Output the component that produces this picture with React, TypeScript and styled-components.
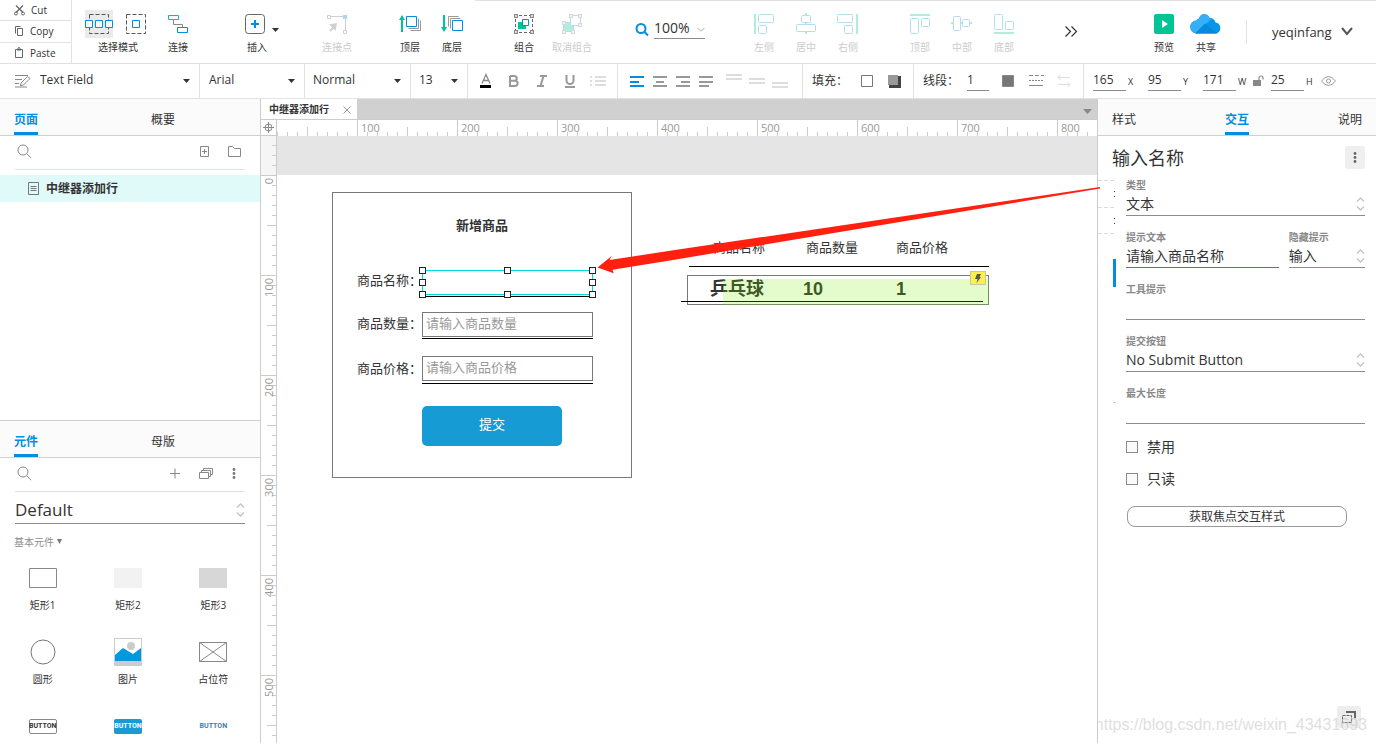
import React from 'react';
import styled, { createGlobalStyle, css } from 'styled-components';

const BLUE = '#008fe0';
const GREEN = '#00c396';
const INK = '#333333';
const GREY = '#8c8c8c';
const LINE = '#e2e2e2';
const PALE_BLUE = '#b3dcf5';
const PALE_GREEN = '#b2ecda';

const GlobalStyle = createGlobalStyle`
  *, *::before, *::after { box-sizing: border-box; }
  body {
    margin: 0;
    background: #fff;
    color: ${INK};
    font-family: 'Open Sans', 'Noto Sans CJK SC', sans-serif;
    font-size: 12px;
  }
  button, input, select {
    font: inherit;
    color: inherit;
    margin: 0;
    padding: 0;
    border: 0;
    border-radius: 0;
    background: none;
    outline: none;
  }
  select { appearance: none; }
  button { cursor: pointer; }
  svg { display: block; flex: none; overflow: visible; }
`;

const Shell = styled.div`
  display: flex;
  flex-direction: column;
  height: 100vh;
  overflow: hidden;
`;

/* ---------- top toolbar ---------- */

const TopBar = styled.header`
  display: flex;
  flex: none;
  height: 64px;
  border-bottom: 1px solid ${LINE};
  background: linear-gradient(${LINE}, ${LINE}) 475px 0 / 100% 1px no-repeat;
`;

const Clipboard = styled.div`
  display: flex;
  flex-direction: column;
  width: 72px;
  flex: none;
  border-right: 1px solid ${LINE};
`;

const ClipButton = styled.button`
  display: flex;
  flex: 1;
  align-items: center;
  gap: 4px;
  padding: 0 0 0 13px;
  font-size: 10px;
  line-height: 14px;
  & + & { border-top: 1px solid ${LINE}; }
`;

const ToolGroup = styled.div<{ $before: number; $gap?: number }>`
  display: flex;
  flex: none;
  gap: ${(p) => p.$gap ?? 0}px;
  margin-left: ${(p) => p.$before}px;
`;

const ToolButton = styled.button<{ $wide?: boolean; $off?: boolean }>`
  display: flex;
  flex-direction: column;
  align-items: center;
  gap: 2px;
  width: ${(p) => (p.$wide ? 70 : 42)}px;
  padding-top: 10px;
  font-size: 10px;
  line-height: 14px;
  white-space: nowrap;
  color: ${(p) => (p.$off ? '#cccccc' : INK)};
`;

const Zoom = styled.label`
  display: flex;
  flex: none;
  gap: 6px;
  margin: 17px 0 0 42px;
  height: 22px;
  & > svg { margin-top: 6px; }
`;

const ZoomField = styled.span`
  display: flex;
  align-items: center;
  width: 51px;
  border-bottom: 1px solid ${GREY};
  font-size: 14px;
  select { width: 44px; height: 20px; line-height: 20px; }
`;

const MoreTools = styled.button`
  width: 24px;
  margin-left: 34px;
  display: flex;
  align-items: center;
  justify-content: center;
`;

const Account = styled.div`
  display: flex;
  align-items: center;
  flex: none;
  margin-left: auto;
`;

const AccountTools = styled.div`
  display: flex;
  align-self: stretch;
`;

const Divider = styled.span`
  width: 1px;
  height: 24px;
  margin: 0 25px 0 19px;
  background: ${LINE};
`;

const UserButton = styled.button`
  display: flex;
  align-items: center;
  gap: 9px;
  width: 104px;
  font-size: 13px;
`;

/* ---------- style bar ---------- */

const StyleBar = styled.div`
  display: flex;
  flex: none;
  height: 35px;
  border-bottom: 1px solid ${LINE};
`;

const Section = styled.div<{ $width?: number; $pad: number }>`
  display: flex;
  align-items: center;
  flex: ${(p) => (p.$width ? 'none' : '1')};
  width: ${(p) => (p.$width ? `${p.$width}px` : 'auto')};
  padding-left: ${(p) => p.$pad}px;
  ${(p) => p.$width && css`border-right: 1px solid ${LINE};`}
`;

const Picker = styled.label`
  display: flex;
  align-items: center;
  flex: 1;
  gap: 9px;
  padding-right: 9px;
  select { flex: 1; min-width: 0; height: 20px; padding-bottom: 2px; line-height: 18px; }
`;

const FormatButton = styled.button<{ $width: number; $before?: number }>`
  display: flex;
  align-items: center;
  justify-content: center;
  width: ${(p) => p.$width}px;
  height: 24px;
  margin-left: ${(p) => p.$before ?? 0}px;
`;

const LockButton = styled(FormatButton)`
  justify-content: flex-start;
`;

const BarLabel = styled.span`
  width: 44px;
  line-height: 18px;
  white-space: nowrap;
`;

const NumberInput = styled.input<{ $width: number }>`
  width: ${(p) => p.$width}px;
  height: 20px;
  padding-bottom: 2px;
  border-bottom: 1px solid ${GREY};
  line-height: 16px;
`;

const Dimension = styled.label<{ $width: number }>`
  display: flex;
  align-items: center;
  gap: 2px;
  width: ${(p) => p.$width}px;
  font-size: 9px;
  input { font-size: 12px; }
`;

/* ---------- body ---------- */

const Body = styled.div`
  display: flex;
  flex: 1;
  min-height: 0;
`;

const LeftColumn = styled.aside`
  display: grid;
  grid-template-rows: minmax(0, 1fr) minmax(323px, 1fr);
  width: 261px;
  flex: none;
  border-right: 1px solid #cccccc;
`;

const Pane = styled.section`
  display: flex;
  flex-direction: column;
  min-height: 0;
  overflow: hidden;
  & + & { border-top: 1px solid #d0d0d0; }
`;

const Tabs = styled.div<{ $spread?: boolean }>`
  display: flex;
  flex: none;
  height: 37px;
  gap: ${(p) => (p.$spread ? 0 : 113)}px;
  justify-content: ${(p) => (p.$spread ? 'space-between' : 'flex-start')};
  padding: 0 14px;
  border-bottom: 1px solid #d0d0d0;
  background: #fbfbfb;
`;

const Tab = styled.button<{ $on?: boolean }>`
  padding-top: 8px;
  border-bottom: 3px solid ${(p) => (p.$on ? BLUE : 'transparent')};
  line-height: 18px;
  color: ${(p) => (p.$on ? BLUE : INK)};
  font-weight: ${(p) => (p.$on ? 700 : 400)};
`;

const SearchRow = styled.div`
  display: flex;
  align-items: center;
  flex: none;
  height: 34px;
  margin: 0 15px;
  padding: 0 0 2px 2px;
  border-bottom: 1px solid ${LINE};
  input { flex: 1; min-width: 0; height: 20px; margin-left: 8px; }
`;

const SearchActions = styled.div<{ $end: number }>`
  display: flex;
  align-items: center;
  gap: 19px;
  padding-right: ${(p) => p.$end}px;
`;

const PageItem = styled.button`
  display: flex;
  align-items: center;
  gap: 7px;
  flex: none;
  height: 27px;
  margin-top: 5px;
  padding: 0 28px;
  background: #e0f9f9;
  font-weight: 700;
  line-height: 18px;
`;

const LibrarySelect = styled.label`
  display: flex;
  align-items: center;
  flex: none;
  height: 32px;
  margin: 0 15px;
  padding-top: 5px;
  border-bottom: 1px solid ${GREY};
  font-size: 17px;
  select { flex: 1; height: 26px; line-height: 26px; }
`;

const CategoryTitle = styled.button`
  display: flex;
  align-items: center;
  gap: 3px;
  flex: none;
  margin-top: 10px;
  padding-left: 14px;
  font-size: 10px;
  line-height: 16px;
  color: ${GREY};
`;

const WidgetGrid = styled.div`
  display: grid;
  grid-template-columns: repeat(3, 1fr);
  grid-auto-rows: 74px;
  padding: 12px 4px 0 0;
`;

const Widget = styled.button`
  display: flex;
  flex-direction: column;
  align-items: center;
  gap: 3px;
  font-size: 10px;
  line-height: 16px;
`;

const WidgetArt = styled.span`
  display: flex;
  align-items: center;
  justify-content: center;
  width: 28px;
  height: 32px;
`;

const MiniButton = styled.span<{ $kind: 'outline' | 'primary' | 'link' }>`
  display: flex;
  align-items: center;
  justify-content: center;
  width: 28px;
  height: 15px;
  border-radius: 2px;
  font: 700 7px/13px 'Roboto', sans-serif;
  border: 1px solid ${(p) => (p.$kind === 'outline' ? '#888' : 'transparent')};
  ${(p) => p.$kind === 'primary' && css`background: #169bd5; color: #fff;`}
  ${(p) => p.$kind === 'link' && css`color: #3c80bd;`}
`;

/* ---------- design area ---------- */

const Center = styled.main`
  position: relative;
  z-index: 1;
  display: flex;
  flex-direction: column;
  flex: 1;
  min-width: 0;
`;

const FileTabs = styled.div`
  display: flex;
  justify-content: space-between;
  flex: none;
  height: 21px;
  padding-right: 5px;
  background: #d0d0d0;
  border-bottom: 1px solid #cccccc;
  & > button { padding-top: 4px; }
`;

const FileTab = styled.div`
  display: flex;
  align-items: center;
  justify-content: space-between;
  width: 96px;
  padding: 0 6px 0 8px;
  background: #fff;
  font-size: 10px;
  font-weight: 700;
  line-height: 18px;
  button { padding-top: 2px; }
`;

const RulerRow = styled.div`
  display: flex;
  flex: none;
  height: 16px;
`;

const Corner = styled.div`
  display: flex;
  align-items: center;
  justify-content: center;
  width: 16px;
  flex: none;
  border-right: 1px solid #cccccc;
  border-bottom: 1px solid #cccccc;
`;

const HRuler = styled.div`
  display: flex;
  flex: 1;
  min-width: 0;
  overflow: hidden;
  padding-left: 80px;
  background:
    repeating-linear-gradient(to right, #ccc 0 1px, transparent 1px 10px) 0 100% / 100% 4px no-repeat,
    repeating-linear-gradient(to right, transparent 0 30px, #ccc 30px 31px, transparent 31px 50px) 0 100% / 100% 9px no-repeat,
    #fff;
`;

const HMark = styled.span`
  width: 100px;
  flex: none;
  padding-left: 3px;
  border-left: 1px solid #cccccc;
  font: 11px/15px 'Open Sans', sans-serif;
  color: #999;
`;

const Stage = styled.div`
  display: flex;
  flex: 1;
  min-height: 0;
`;

const VRuler = styled.div`
  width: 16px;
  flex: none;
  overflow: hidden;
  padding-top: 39px;
  border-right: 1px solid #cccccc;
  background:
    repeating-linear-gradient(to bottom, transparent 0 9px, #ccc 9px 10px) 100% 0 / 4px 100% no-repeat,
    repeating-linear-gradient(to bottom, transparent 0 39px, #ccc 39px 40px, transparent 40px 50px) 100% 0 / 9px 100% no-repeat,
    linear-gradient(#f5f5f5, #f5f5f5) 0 0 / 100% 39px no-repeat,
    #fff;
`;

const VMark = styled.div`
  height: 100px;
  padding-top: 2px;
  border-top: 1px solid #cccccc;
  color: #999;
  font: 11px/15px 'Open Sans', sans-serif;
  span { display: block; writing-mode: vertical-rl; transform: rotate(180deg); width: 15px; text-align: right; }
`;

const Canvas = styled.div`
  position: relative;
  flex: 1;
  min-width: 0;
  background: linear-gradient(#e5e5e5, #e5e5e5) 0 0 / 100% 39px no-repeat, #fff;
`;

/* Origin of the design: the 0,0 of both rulers. */
const Artboard = styled.div`
  position: absolute;
  left: -20px;
  top: 39px;
  font-size: 13px;
  line-height: 20px;
`;

const Node = styled.div<{ $x: number; $y: number; $w?: number; $h?: number }>`
  position: absolute;
  left: ${(p) => p.$x}px;
  top: ${(p) => p.$y}px;
  ${(p) => p.$w && css`width: ${p.$w}px;`}
  ${(p) => p.$h && css`height: ${p.$h}px;`}
  white-space: nowrap;
`;

const Frame = styled(Node)`
  border: 1px solid #797979;
`;

const Rule = styled(Node)`
  height: 1px;
  background: #000;
`;

const Heading = styled(Node)`
  font-weight: 700;
  text-align: center;
`;

const CanvasInput = styled.input`
  display: block;
  width: 100%;
  height: 25px;
  padding: 0 3px 3px;
  border: 1px solid #797979;
  &::placeholder { color: #999; opacity: 1; }
`;

const SelectedInput = styled(CanvasInput)`
  border-color: #00dada;
`;

const Handle = styled(Node)`
  width: 7px;
  height: 7px;
  border: 1px solid #222;
  background: #fff;
`;

const SubmitButton = styled.button`
  width: 100%;
  height: 40px;
  padding-bottom: 4px;
  border-radius: 5px;
  background: #169bd5;
  color: #fff;
`;

const Goods = styled.table`
  border-collapse: collapse;
  table-layout: fixed;
  width: 260px;
  th {
    height: 36px;
    padding: 0 0 0 3px;
    font-weight: 400;
    text-align: left;
  }
  th:last-child { padding: 0; }
  td {
    height: 48px;
    padding: 0;
    font: 700 18px/24px 'Liberation Sans', 'Noto Sans CJK SC', sans-serif;
  }
`;

const Repeat = styled(Node)`
  background: rgba(120, 240, 0, 0.2);
`;

const Badge = styled(Node)`
  display: flex;
  align-items: center;
  justify-content: center;
  border: 1px solid #c8c8a0;
  background: #fdf04a;
`;

const Arrow = styled.svg`
  position: absolute;
  left: 320px;
  top: 51px;
  z-index: 5;
  pointer-events: none;
`;

/* ---------- inspector ---------- */

const Inspector = styled.aside`
  position: relative;
  display: flex;
  flex-direction: column;
  width: 279px;
  flex: none;
  border-left: 1px solid #cccccc;
`;

const TitleRow = styled.div`
  display: flex;
  align-items: flex-start;
  justify-content: space-between;
  height: 42px;
  padding: 10px 11px 0 14px;
  font-size: 18px;
  line-height: 24px;
  button {
    display: flex;
    align-items: center;
    justify-content: center;
    width: 20px;
    height: 23px;
    border-radius: 2px;
    background: #efefef;
  }
`;

const Fields = styled.div`
  display: flex;
  flex-direction: column;
  gap: 14px;
  padding: 0 11px 0 28px;
`;

const FieldPair = styled.div`
  display: grid;
  grid-template-columns: 2fr 1fr;
  gap: 10px;
`;

const Field = styled.label<{ $focus?: boolean }>`
  display: flex;
  flex-direction: column;
  min-width: 0;
  font-size: 10px;
  line-height: 14px;
  color: #888;
  font-weight: 700;
  & > span:last-child {
    display: flex;
    align-items: center;
    height: 24px;
    border-bottom: 1px solid ${(p) => (p.$focus ? BLUE : GREY)};
    font-size: 14px;
    font-weight: 400;
    color: ${INK};
  }
  input, select { flex: 1; width: 0; height: 22px; line-height: 22px; }
`;

const Check = styled.label`
  display: flex;
  align-items: center;
  gap: 9px;
  height: 18px;
  font-size: 14px;
  line-height: 18px;
  input {
    appearance: none;
    width: 12px;
    height: 12px;
    border: 1px solid ${GREY};
    background: #fafafa;
  }
`;

const StyleButton = styled.button`
  height: 21px;
  margin: 4px 18px 0 1px;
  border: 1px solid #999999;
  border-radius: 8px;
  line-height: 18px;
`;

const PeekMark = styled.i<{ $x: number; $y: number; $w: number; $h: number; $c?: string }>`
  position: absolute;
  left: ${(p) => p.$x}px;
  top: ${(p) => p.$y}px;
  width: ${(p) => p.$w}px;
  height: ${(p) => p.$h}px;
  background: ${(p) => p.$c};
`;

const DashMark = styled(PeekMark)`
  background: repeating-linear-gradient(to right, #dcdcdc 0 4px, transparent 4px 6px);
`;

const DockButton = styled.button`
  position: absolute;
  right: 15px;
  bottom: 15px;
  display: flex;
  align-items: center;
  justify-content: center;
  width: 24px;
  height: 22px;
  border-radius: 3px;
  background: #ededed;
`;

const Watermark = styled.div`
  position: absolute;
  right: 9px;
  bottom: 8px;
  font: 16px/20px 'Liberation Sans', sans-serif;
  white-space: nowrap;
  color: rgba(190, 190, 190, 0.5);
  pointer-events: none;
`;

/* ---------- icons ---------- */

const Caret = () => (
  <svg width="7" height="4" aria-hidden="true"><path d="M0 0h7L3.5 4z" fill="#333" /></svg>
);

const Stepper = () => (
  <svg width="9" height="14" fill="none" stroke="#c4c4c4" strokeWidth="1.3" aria-hidden="true">
    <path d="M1 4.5 4.5 1 8 4.5M1 9.5 4.5 13 8 9.5" />
  </svg>
);

const SearchIcon = () => (
  <svg width="15" height="15" fill="none" stroke="#888" aria-hidden="true">
    <circle cx="6" cy="6" r="5" /><path d="m9.7 9.7 4.5 4.3" />
  </svg>
);

const Dots = ({ gap = 5, color = '#777' }: { gap?: number; color?: string }) => (
  <svg width="4" height={gap * 2 + 3} fill={color} aria-hidden="true">
    {[0, 1, 2].map((i) => <circle key={i} cx="2" cy={1.5 + i * gap} r="1.4" />)}
  </svg>
);

const Art = ({ children, w = 42 }: { children: React.ReactNode; w?: number }) => (
  <svg width={w} height="28" fill="none" stroke="#666" aria-hidden="true">{children}</svg>
);

const Corners = ({ points, stroke, fill }: { points: number[][]; stroke: string; fill: string }) => (
  <g stroke={stroke} fill={fill}>
    {points.map(([x, y]) => <rect key={`${x}-${y}`} x={x} y={y} width="3" height="3" />)}
  </g>
);

const art = {
  select: (
    <Art w={68}>
      <path d="M1 0h28v28H1z" fill="#ebebeb" stroke="none" />
      <rect x="5.5" y="4.5" width="19" height="19" stroke="#555" strokeDasharray="4 2" />
      <g stroke={BLUE} fill="#f4f8fb"><path d="M1.5 10.5h7v7h-7zM11.5 10.5h7v7h-7zM21.5 10.5h7v7h-7z" /></g>
      <rect x="42.5" y="4.5" width="19" height="19" stroke="#555" strokeDasharray="4 2" />
      <path d="M48.5 10.5h7v7h-7z" stroke={BLUE} />
    </Art>
  ),
  connect: (
    <Art>
      <path d="M16.5 10v4.5h9v3" stroke="#888" />
      <path d="M11.5 5.5h10v4h-10z" stroke={GREEN} />
      <path d="M20.5 17.5h10v5h-10z" stroke={BLUE} />
    </Art>
  ),
  insert: (
    <Art>
      <rect x="9.5" y="4.5" width="19" height="19" rx="3" />
      <path d="M15 14h8M19 10v8" stroke={BLUE} strokeWidth="2" />
      <path d="M36 18h7l-3.5 4z" fill="#333" stroke="none" />
    </Art>
  ),
  point: (
    <Art>
      <g stroke="#d0d0d0">
        <path d="M15 6.5h13M29.500 9v11" /><path d="M11.500 5.500h3v3h-3zM27.500 20.500h3v3h-3z" />
        <path d="m14 21 4-4" strokeWidth="2" /><path d="m13 14.500 8-1.500-1.500 8-2.500-3z" fill="#d0d0d0" stroke="none" />
      </g>
      <path d="M27 5h4v4h-4z" fill="#a8d8f5" stroke="none" />
    </Art>
  ),
  front: (
    <Art>
      <path d="M13 22V9" stroke={GREEN} strokeWidth="2" /><path d="M10 10h6l-3-5z" fill={GREEN} stroke="none" />
      <path d="M29.500 8.500v10h-10M31.500 10.500v10h-10" stroke="#999" />
      <path d="M17.500 6.500h10v10h-10z" stroke={BLUE} fill="#fff" />
    </Art>
  ),
  back: (
    <Art>
      <path d="M13 5v13" stroke={GREEN} strokeWidth="2" /><path d="M10 17h6l-3 5z" fill={GREEN} stroke="none" />
      <path d="M17.500 16.500v-10h10M19.500 18.500v-10h10" stroke="#999" />
      <path d="M21.500 10.500h10v10h-10z" stroke={BLUE} fill="#fff" />
    </Art>
  ),
  group: (
    <Art>
      <path d="M16 5.500h11M16 22.500h11M12.500 9v11M29.500 9v11" strokeDasharray="3 2" stroke="#666" />
      <path d="M15 12h8v7h-8z" fill={GREEN} stroke="none" />
      <path d="M19.500 9.500h6v6h-6z" stroke={BLUE} fill="#fff" />
      <Corners stroke="#888" fill="#ddd" points={[[11.5, 4.5], [27.5, 4.5], [11.5, 20.5], [27.5, 20.5]]} />
    </Art>
  ),
  ungroup: (
    <Art>
      <path d="M12.500 12.500h10v9h-10z" fill={PALE_GREEN} stroke={PALE_BLUE} />
      <path d="M19.500 5.500h10v10h-10z" stroke={PALE_BLUE} fill="#fff" />
      <Corners stroke="#d8d8d8" fill="#f4f4f4" points={[[18.5, 4.5], [27.5, 4.5], [27.5, 13.5], [11.5, 11.5], [11.5, 20.5], [20.5, 20.5]]} />
    </Art>
  ),
  left: (
    <Art>
      <path d="M12 4v20" stroke={PALE_GREEN} strokeWidth="2" />
      <g stroke={PALE_BLUE}><rect x="15.500" y="4.500" width="15" height="8" rx="1" /><rect x="15.500" y="15.500" width="8" height="8" rx="1" /></g>
    </Art>
  ),
  center: (
    <Art>
      <path d="M21 3v21" stroke={PALE_GREEN} strokeWidth="2" />
      <g stroke={PALE_BLUE} fill="#fff"><rect x="16.500" y="5.500" width="9" height="7" rx="1" /><rect x="11.500" y="14.500" width="19" height="7" rx="1" /></g>
    </Art>
  ),
  right: (
    <Art>
      <path d="M30 4v20" stroke={PALE_GREEN} strokeWidth="2" />
      <g stroke={PALE_BLUE}><rect x="10.500" y="4.500" width="15" height="8" rx="1" /><rect x="17.500" y="15.500" width="8" height="8" rx="1" /></g>
    </Art>
  ),
  top: (
    <Art>
      <path d="M11 5h20" stroke={PALE_GREEN} strokeWidth="2" />
      <g stroke={PALE_BLUE}><rect x="11.500" y="8.500" width="8" height="15" rx="1" /><rect x="22.500" y="8.500" width="8" height="8" rx="1" /></g>
    </Art>
  ),
  middle: (
    <Art>
      <path d="M10 13h21" stroke={PALE_GREEN} strokeWidth="2" />
      <g stroke={PALE_BLUE} fill="#fff"><rect x="12.500" y="6.500" width="7" height="14" rx="1" /><rect x="21.500" y="9.500" width="7" height="7" rx="1" /></g>
    </Art>
  ),
  bottom: (
    <Art>
      <path d="M11 23h20" stroke={PALE_GREEN} strokeWidth="2" />
      <g stroke={PALE_BLUE}><rect x="11.500" y="4.500" width="8" height="15" rx="1" /><rect x="22.500" y="11.500" width="8" height="8" rx="1" /></g>
    </Art>
  ),
  preview: (
    <Art>
      <rect x="11" y="4" width="20" height="20" rx="2" fill={GREEN} stroke="none" />
      <path d="M19 10v8l6-4z" fill="#fff" stroke="none" />
    </Art>
  ),
  share: (
    <Art>
      <g stroke="none">
        <path d="M12 23.500a6.500 6.500 0 0 1-.5-13A4 4 0 0 1 14 8.500a5.500 5.500 0 0 1 10.500-.5 6 6 0 0 1 6 4.500 5.600 5.600 0 0 1 .5 11z" fill="#0a96e8" />
        <path d="M12 23.500a6.500 6.500 0 0 1-.5-13A4 4 0 0 1 14 8.500a5.500 5.500 0 0 1 10.500-.5L26 9l-5 5-9.500 9.500z" fill="#36aef8" />
        <path d="m20 13.500 12.500 10H10z" fill="#0688dc" />
      </g>
    </Art>
  ),
};

const ALIGN: Record<string, string> = {
  左对齐: 'M0 2h14M0 7h9M0 11h14',
  居中对齐: 'M0 2h14M3 7h8M0 11h14',
  右对齐: 'M0 2h14M5 7h9M0 11h14',
  两端对齐: 'M0 2h14M0 7h14M0 11h10',
};

const VALIGN: Record<string, string> = {
  顶端: 'M0 1h16M0 5h16',
  垂直居中: 'M0 5h16M0 9h16',
  底端: 'M0 9h16M0 13h16',
};

/* ---------- data ---------- */

type ToolDef = [keyof typeof art, string, boolean?];

const TOOL_GROUPS: { before: number; gap?: number; tools: ToolDef[] }[] = [
  { before: 11, gap: 4, tools: [['select', '选择模式'], ['connect', '连接']] },
  { before: 37, tools: [['insert', '插入']] },
  { before: 38, tools: [['point', '连接点', true]] },
  { before: 31, tools: [['front', '顶层'], ['back', '底层']] },
  { before: 30, gap: 6, tools: [['group', '组合'], ['ungroup', '取消组合', true]] },
];

const ALIGN_GROUPS: { before: number; tools: ToolDef[] }[] = [
  { before: 38, tools: [['left', '左侧', true], ['center', '居中', true], ['right', '右侧', true]] },
  { before: 30, tools: [['top', '顶部', true], ['middle', '中部', true], ['bottom', '底部', true]] },
];

const FORM_ROWS = [
  { label: '商品数量', y: 137, labelY: 138, ruleY: 163 },
  { label: '商品价格', y: 181, labelY: 183, ruleY: 208 },
];

const HANDLES = [
  [162, 92], [247, 92], [332, 92],
  [162, 104], [332, 104],
  [162, 116], [247, 116], [332, 116],
];

const Tools = ({ groups }: { groups: { before: number; gap?: number; tools: ToolDef[] }[] }) => (
  <>
    {groups.map((g) => (
      <ToolGroup key={g.tools[0][0]} $before={g.before} $gap={g.gap}>
        {g.tools.map(([id, label, off]) => (
          <ToolButton key={id} type="button" $wide={id === 'select'} $off={off}>
            {art[id]}
            {label}
          </ToolButton>
        ))}
      </ToolGroup>
    ))}
  </>
);

const TopToolbar = () => (
  <TopBar>
    <Clipboard>
      <ClipButton type="button">
        <svg width="14" height="12" fill="none" stroke="#666" aria-hidden="true">
          <path d="m3 1.500 7 7M10 1.500l-7 7" strokeWidth="1.300" /><circle cx="3" cy="9.500" r="1.500" /><circle cx="10" cy="9.500" r="1.500" />
        </svg>
        Cut
      </ClipButton>
      <ClipButton type="button">
        <svg width="13" height="12" fill="none" stroke="#666" aria-hidden="true">
          <path d="M4.500 3.500h5v7h-5z" /><path d="M2.500 8.500v-7h5" />
        </svg>
        Copy
      </ClipButton>
      <ClipButton type="button">
        <svg width="13" height="12" fill="none" stroke="#666" aria-hidden="true">
          <path d="M2.500 2.500h7v8h-7z" /><path d="M4 2.500h4" strokeWidth="2" /><path d="M5 .8h2" />
        </svg>
        Paste
      </ClipButton>
    </Clipboard>
    <Tools groups={TOOL_GROUPS} />
    <Zoom>
      <svg width="13" height="13" fill="none" stroke={BLUE} strokeWidth="2" aria-hidden="true">
        <circle cx="6" cy="5.500" r="4.500" /><path d="m9 8.500 4 4" />
      </svg>
      <ZoomField>
        <select aria-label="缩放"><option>100%</option></select>
        <svg width="8" height="5" fill="none" stroke="#ccc" strokeWidth="1.300" aria-hidden="true"><path d="m.5 3 3.500 3L7.500 3" /></svg>
      </ZoomField>
    </Zoom>
    <Tools groups={ALIGN_GROUPS} />
    <MoreTools type="button" aria-label="更多工具">
      <svg width="12" height="11" fill="none" stroke="#333" strokeWidth="1.200" aria-hidden="true"><path d="m.5.5 5 5-5 5M6.500.5l5 5-5 5" /></svg>
    </MoreTools>
    <Account>
      <AccountTools>
        <ToolButton type="button">{art.preview}预览</ToolButton>
        <ToolButton type="button">{art.share}共享</ToolButton>
      </AccountTools>
      <Divider />
      <UserButton type="button">
        yeqinfang
        <svg width="12" height="7" fill="none" stroke="#555" strokeWidth="2" aria-hidden="true"><path d="m1 0 5 6 5-6" /></svg>
      </UserButton>
    </Account>
  </TopBar>
);

const FormatBar = () => (
  <StyleBar>
    <Section $width={200} $pad={15}>
      <Picker>
        <svg width="16" height="14" fill="none" stroke="#888" aria-hidden="true">
          <path d="M0 1.500h13M0 5.500h7M0 9.500h4M0 13h12" /><path d="m6 9 6.500-6.500 2.500 2L8.500 11l-3.200.8z" fill="#fff" />
        </svg>
        <select aria-label="元件样式"><option>Text Field</option></select>
        <Caret />
      </Picker>
    </Section>
    <Section $width={105} $pad={9}>
      <Picker><select aria-label="字体"><option>Arial</option></select><Caret /></Picker>
    </Section>
    <Section $width={106} $pad={8}>
      <Picker><select aria-label="字形"><option>Normal</option></select><Caret /></Picker>
    </Section>
    <Section $width={57} $pad={8}>
      <Picker><select aria-label="字号"><option>13</option></select><Caret /></Picker>
    </Section>
    <Section $width={150} $pad={4}>
      <FormatButton type="button" $width={28} aria-label="文字颜色">
        <svg width="12" height="14" fill="none" stroke="#888" aria-hidden="true"><path d="M2 9.500 6 .5l4 9M3.500 6.500h5" strokeWidth="1.300" /><path d="M0 12.500h11" stroke="#000" strokeWidth="3" /></svg>
      </FormatButton>
      <FormatButton type="button" $width={28} aria-label="粗体">
        <svg width="10" height="12" fill="none" stroke="#999" strokeWidth="2" aria-hidden="true"><path d="M1 1h4.500a2.300 2.300 0 0 1 0 4.700H1M1 5.700h5a2.600 2.600 0 0 1 0 5.300H1zV1" /></svg>
      </FormatButton>
      <FormatButton type="button" $width={28} aria-label="斜体">
        <svg width="10" height="12" fill="none" stroke="#999" strokeWidth="2" aria-hidden="true"><path d="M3 1h7M0 11h7M6.500 1l-3 10" /></svg>
      </FormatButton>
      <FormatButton type="button" $width={28} aria-label="下划线">
        <svg width="10" height="13" fill="none" stroke="#999" strokeWidth="2" aria-hidden="true"><path d="M1.500 0v5.500a3.500 3.500 0 0 0 7 0V0" /><path d="M0 12h10" /></svg>
      </FormatButton>
      <FormatButton type="button" $width={28} aria-label="项目符号">
        <svg width="16" height="12" fill="none" stroke="#ddd" strokeWidth="2" aria-hidden="true"><path d="M0 2h2M5 2h11M0 6h2M5 6h11M0 10h2M5 10h11" /></svg>
      </FormatButton>
    </Section>
    <Section $width={185} $pad={7}>
      {Object.entries(ALIGN).map(([name, d], i) => (
        <FormatButton key={name} type="button" $width={23} aria-label={name}>
          <svg width="14" height="12" stroke={i === 0 ? BLUE : '#999'} strokeWidth="2" aria-hidden="true"><path d={d} /></svg>
        </FormatButton>
      ))}
      {Object.entries(VALIGN).map(([name, d], i) => (
        <FormatButton key={name} type="button" $width={23} $before={i === 0 ? 5 : 0} aria-label={name}>
          <svg width="16" height="14" stroke="#ddd" strokeWidth="2" aria-hidden="true"><path d={d} /></svg>
        </FormatButton>
      ))}
    </Section>
    <Section $width={111} $pad={9}>
      <BarLabel>填充：</BarLabel>
      <FormatButton type="button" $width={21} aria-label="填充颜色">
        <svg width="12" height="12" fill="none" stroke="#777" aria-hidden="true"><path d="M.5.5h11v11H.5z" /></svg>
      </FormatButton>
      <FormatButton type="button" $width={21} $before={7} aria-label="阴影">
        <svg width="13" height="13" aria-hidden="true"><path d="M1 1h12v12H1z" fill="#444" /><path d="M0 0h10v10H0z" fill="#999" /></svg>
      </FormatButton>
    </Section>
    <Section $width={170} $pad={9}>
      <BarLabel>线段：</BarLabel>
      <NumberInput aria-label="线宽" $width={22} defaultValue="1" />
      <FormatButton type="button" $width={28} $before={5} aria-label="线段颜色">
        <svg width="12" height="12" aria-hidden="true"><path d="M.5.5h11v11H.5z" fill="#777" stroke="#888" /></svg>
      </FormatButton>
      <FormatButton type="button" $width={28} aria-label="线型">
        <svg width="14" height="12" stroke="#888" aria-hidden="true"><path d="M0 .5h15" strokeDasharray="4 2" /><path d="M0 5.500h14" strokeDasharray="2 1" /><path d="M0 10.500h14" /></svg>
      </FormatButton>
      <FormatButton type="button" $width={28} aria-label="箭头样式">
        <svg width="14" height="12" fill="none" stroke="#ddd" aria-hidden="true"><path d="M13 2.500H1M3.500 0 1 2.500 3.500 5M1 9.500h12M10.500 7 13 9.500 10.500 12" /></svg>
      </FormatButton>
    </Section>
    <Section $pad={9}>
      <Dimension $width={55}><NumberInput $width={33} defaultValue="165" />X</Dimension>
      <Dimension $width={55}><NumberInput $width={33} defaultValue="95" />Y</Dimension>
      <Dimension $width={50}><NumberInput $width={33} defaultValue="171" />W</Dimension>
      <LockButton type="button" $width={18} aria-label="锁定比例">
        <svg width="11" height="12" fill="none" aria-hidden="true"><path d="M0 5h8v6H0z" fill="#888" /><path d="M6 5V3a2 2 0 0 1 4 0v1.500" stroke="#888" strokeWidth="1.200" /></svg>
      </LockButton>
      <Dimension $width={50}><NumberInput $width={33} defaultValue="25" />H</Dimension>
      <svg width="15" height="10" fill="none" stroke="#999" aria-hidden="true"><path d="M.5 5Q7.500-4 14.500 5 7.500 14 .5 5z" /><circle cx="7.500" cy="5" r="2" /></svg>
    </Section>
  </StyleBar>
);

const WIDGETS: { label: string; art: React.ReactNode }[] = [
  { label: '矩形1', art: <svg width="28" height="20"><path d="M.5.5h27v19H.5z" fill="#fff" stroke="#888" /></svg> },
  { label: '矩形2', art: <svg width="28" height="20"><path d="M0 0h28v20H0z" fill="#f2f2f2" /></svg> },
  { label: '矩形3', art: <svg width="28" height="20"><path d="M0 0h28v20H0z" fill="#d7d7d7" /></svg> },
  { label: '圆形', art: <svg width="26" height="26"><circle cx="13" cy="13" r="12" fill="#fff" stroke="#777" /></svg> },
  {
    label: '图片',
    art: (
      <svg width="28" height="28">
        <path d="M.5.5h27v27H.5z" fill="#fff" stroke="#ccc" /><circle cx="17" cy="8" r="4" fill="#ccc" />
        <path d="M1 17 9 10l10 6 8-6v13H1z" fill="#0099dd" /><path d="M0 23h28v5H0z" fill="#ccc" />
      </svg>
    ),
  },
  { label: '占位符', art: <svg width="28" height="20"><path d="M.5.5h27v19H.5zl27 19M27.500.5.5 19.500" fill="none" stroke="#888" /></svg> },
  { label: '', art: <MiniButton $kind="outline">BUTTON</MiniButton> },
  { label: '', art: <MiniButton $kind="primary">BUTTON</MiniButton> },
  { label: '', art: <MiniButton $kind="link">BUTTON</MiniButton> },
];

const LeftPanels = () => (
  <LeftColumn>
    <Pane>
      <Tabs>
        <Tab type="button" $on>页面</Tab>
        <Tab type="button">概要</Tab>
      </Tabs>
      <SearchRow>
        <SearchIcon />
        <input type="text" aria-label="搜索页面" />
        <SearchActions $end={4}>
          <svg width="9" height="11" fill="none" stroke="#888" aria-hidden="true"><path d="M.5.5h8v10h-8zM2 5.500h5M4.500 3v5" /></svg>
          <svg width="13" height="11" fill="none" stroke="#888" aria-hidden="true"><path d="M.5 10.500V.5h4l2 2h6v8z" /></svg>
        </SearchActions>
      </SearchRow>
      <PageItem type="button">
        <svg width="11" height="13" fill="none" stroke="#777" aria-hidden="true"><path d="M.5.5h10v12H.5zM2.500 4.500h6M2.500 6.500h6M2.500 8.500h6" /></svg>
        中继器添加行
      </PageItem>
    </Pane>
    <Pane>
      <Tabs>
        <Tab type="button" $on>元件</Tab>
        <Tab type="button">母版</Tab>
      </Tabs>
      <SearchRow>
        <SearchIcon />
        <input type="text" aria-label="搜索元件" />
        <SearchActions $end={9}>
          <svg width="10" height="11" stroke="#888" aria-hidden="true"><path d="M0 5.500h10M5 .5v10" /></svg>
          <svg width="14" height="11" fill="none" stroke="#888" aria-hidden="true"><path d="M.5 4.500h9v6h-9zM2.500 4.500v-2h9v6h-2M4.500 2.500v-2h9v6h-2" /></svg>
          <Dots gap={4} />
        </SearchActions>
      </SearchRow>
      <LibrarySelect>
        <select aria-label="元件库"><option>Default</option></select>
        <Stepper />
      </LibrarySelect>
      <CategoryTitle type="button">
        基本元件
        <svg width="5" height="7" aria-hidden="true"><path d="M0 0h5L2.500 5z" fill="#777" /></svg>
      </CategoryTitle>
      <WidgetGrid>
        {WIDGETS.map((w, i) => (
          <Widget key={i} type="button">
            <WidgetArt>{w.art}</WidgetArt>
            {w.label}
          </Widget>
        ))}
      </WidgetGrid>
    </Pane>
  </LeftColumn>
);

const Design = () => (
  <Center>
    <FileTabs>
      <FileTab>
        中继器添加行
        <button type="button" aria-label="关闭">
          <svg width="8" height="8" stroke="#999" aria-hidden="true"><path d="m.5.5 7 7M7.500.5l-7 7" /></svg>
        </button>
      </FileTab>
      <button type="button" aria-label="所有页面">
        <svg width="9" height="5" aria-hidden="true"><path d="M0 0h9L4.500 5z" fill="#888" /></svg>
      </button>
    </FileTabs>
    <RulerRow>
      <Corner>
        <svg width="11" height="11" fill="none" stroke="#888" aria-hidden="true"><circle cx="5.500" cy="5.500" r="3.500" /><path d="M0 5.500h11M5.500 0v11" /></svg>
      </Corner>
      <HRuler>
        {[100, 200, 300, 400, 500, 600, 700, 800].map((n) => <HMark key={n}>{n}</HMark>)}
      </HRuler>
    </RulerRow>
    <Stage>
      <VRuler>
        {[0, 100, 200, 300, 400, 500].map((n) => <VMark key={n}><span>{n}</span></VMark>)}
      </VRuler>
      <Canvas>
        <Artboard>
          <Frame $x={75} $y={17} $w={300} $h={286} />
          <Heading $x={75} $y={40} $w={300}>新增商品</Heading>

          <Node as="label" htmlFor="goods-name" $x={100} $y={95}>商品名称：</Node>
          <Node $x={165} $y={95} $w={171}><SelectedInput id="goods-name" /></Node>
          <Rule $x={165} $y={121} $w={171} />
          {HANDLES.map(([x, y]) => <Handle key={`${x}-${y}`} $x={x} $y={y} />)}

          {FORM_ROWS.map((row) => (
            <React.Fragment key={row.label}>
              <Node as="label" htmlFor={row.label} $x={100} $y={row.labelY}>{row.label}：</Node>
              <Node $x={165} $y={row.y} $w={171}>
                <CanvasInput id={row.label} placeholder={`请输入${row.label}`} />
              </Node>
              <Rule $x={165} $y={row.ruleY} $w={171} />
            </React.Fragment>
          ))}
          <Node $x={165} $y={231} $w={140}><SubmitButton type="button">提交</SubmitButton></Node>

          <Rule $x={432} $y={91} $w={300} />
          <Frame $x={430} $y={100} $w={302} $h={30} />
          <Node $x={453} $y={54}>
            <Goods>
              <colgroup><col width="93" /><col width="93" /><col /></colgroup>
              <thead><tr><th>商品名称</th><th>商品数量</th><th>商品价格</th></tr></thead>
              <tbody><tr><td>乒乓球</td><td>10</td><td>1</td></tr></tbody>
            </Goods>
          </Node>
          <Rule $x={424} $y={126} $w={302} />
          <Repeat $x={466} $y={104} $w={266} $h={26} />
          <Badge $x={713} $y={96} $w={16} $h={14}>
            <svg width="6" height="9" aria-hidden="true"><path d="M2 0h4L4.500 3H6L1.500 9l1-4H0z" fill="#555" /></svg>
          </Badge>
        </Artboard>
        <Arrow width="503" height="88" aria-hidden="true">
          <path d="M503 0 73 63.800 12.500 73 14.700 69 .5 80.500l16.200 5.800-1.200-3.600L73 73.500 503 1.500z" fill="#ff2010" />
        </Arrow>
      </Canvas>
    </Stage>
  </Center>
);

const Properties = () => (
  <Inspector>
    <Tabs $spread>
      <Tab type="button">样式</Tab>
      <Tab type="button" $on>交互</Tab>
      <Tab type="button">说明</Tab>
    </Tabs>
    <TitleRow>
      输入名称
      <button type="button" aria-label="更多"><Dots gap={4} color="#666" /></button>
    </TitleRow>
    <Fields>
      <Field>
        <span>类型</span>
        <span><select><option>文本</option></select><Stepper /></span>
      </Field>
      <FieldPair>
        <Field $focus>
          <span>提示文本</span>
          <span><input type="text" defaultValue="请输入商品名称" /></span>
        </Field>
        <Field>
          <span>隐藏提示</span>
          <span><select><option>输入</option></select><Stepper /></span>
        </Field>
      </FieldPair>
      <Field>
        <span>工具提示</span>
        <span><input type="text" /></span>
      </Field>
      <Field>
        <span>提交按钮</span>
        <span><select><option>No Submit Button</option></select><Stepper /></span>
      </Field>
      <Field>
        <span>最大长度</span>
        <span><input type="text" /></span>
      </Field>
      <Check><input type="checkbox" />禁用</Check>
      <Check><input type="checkbox" />只读</Check>
      <StyleButton type="button">获取焦点交互样式</StyleButton>
    </Fields>

    <DashMark $x={0} $y={81} $w={17} $h={1} />
    <DashMark $x={0} $y={108} $w={17} $h={1} />
    <DashMark $x={0} $y={134} $w={17} $h={1} />
    {[92, 97, 119, 124].map((y) => <PeekMark key={y} $x={16} $y={y} $w={1} $h={1} $c="#333" />)}
    <PeekMark $x={15} $y={160} $w={3} $h={28} $c={BLUE} />
    <PeekMark $x={15} $y={303} $w={3} $h={1} $c="#ccc" />

    <DockButton type="button" aria-label="浮动面板">
      <svg width="14" height="12" fill="none" stroke="#666" aria-hidden="true"><path d="M.5 4.500h9v7h-9z" strokeDasharray="3 1" /><path d="M4 1h9v6" strokeWidth="2" /></svg>
    </DockButton>
    <Watermark>https://blog.csdn.net/weixin_43431693</Watermark>
  </Inspector>
);

export default function App() {
  return (
    <Shell>
      <GlobalStyle />
      <TopToolbar />
      <FormatBar />
      <Body>
        <LeftPanels />
        <Design />
        <Properties />
      </Body>
    </Shell>
  );
}
